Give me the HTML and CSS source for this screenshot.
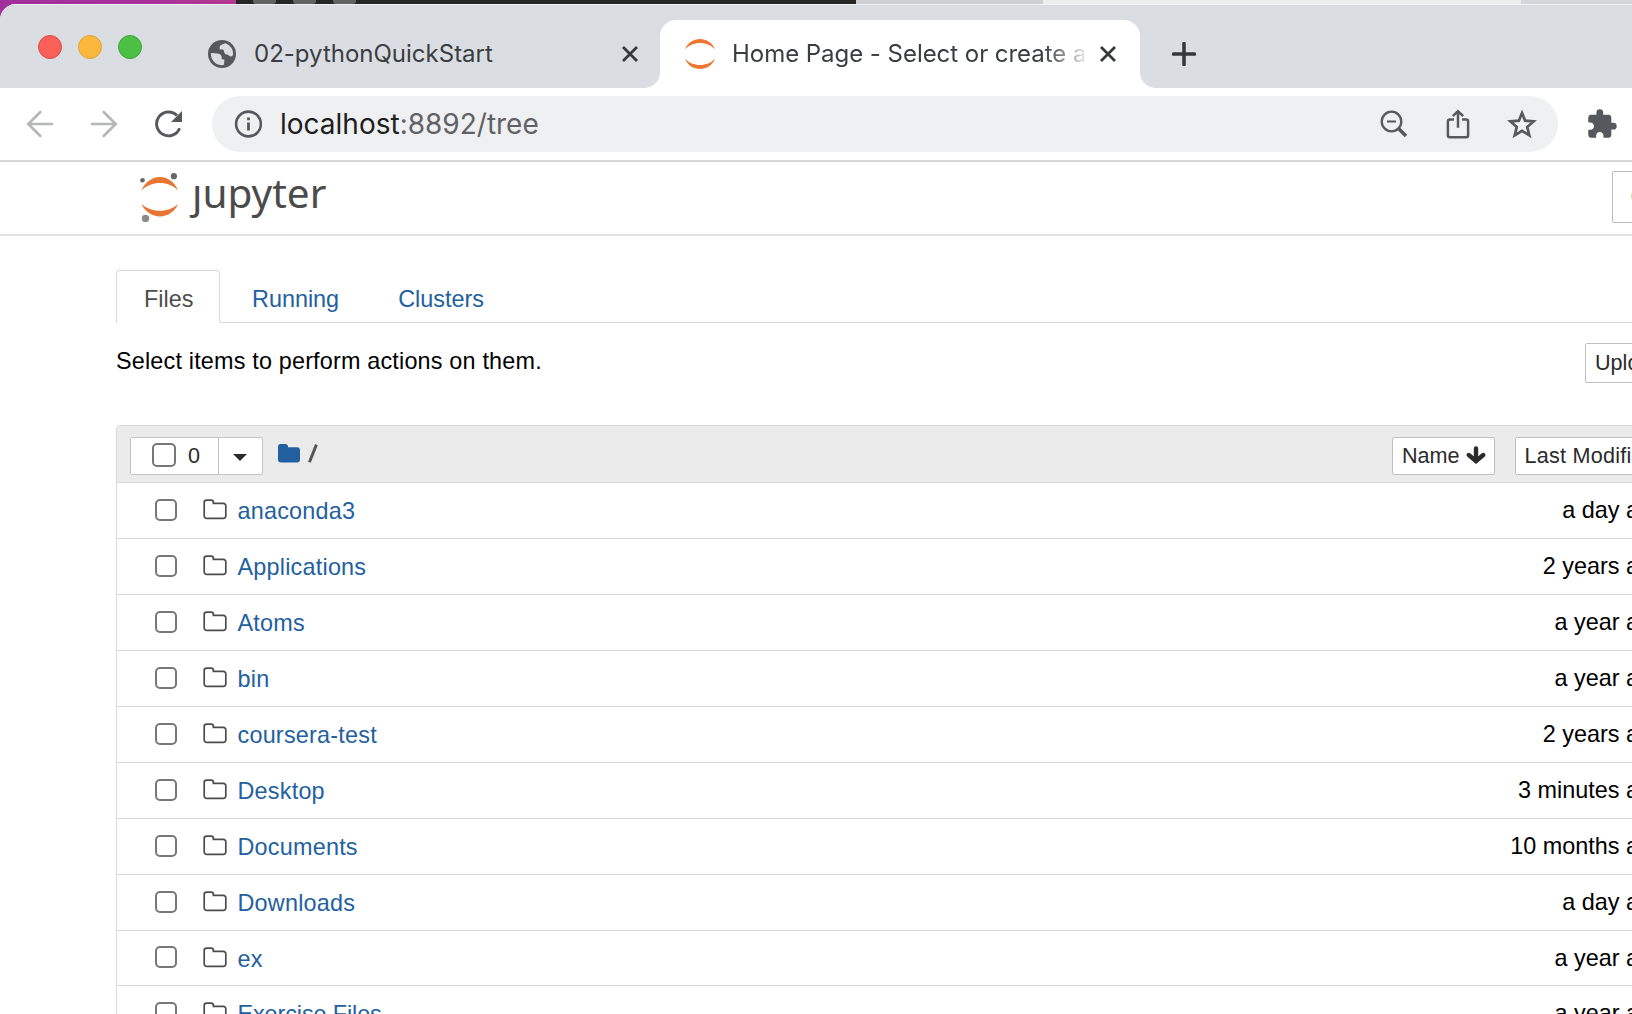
FILE: index.html
```html
<!DOCTYPE html>
<html lang="en">
<head>
<meta charset="utf-8">
<title>Home Page - Select or create a notebook</title>
<link rel="stylesheet" href="styles.css">
</head>
<body>
<svg class="defs" width="0" height="0" aria-hidden="true">
  <symbol id="folder" viewBox="0 0 24 21"><path d="M1.200 3.600A2.400 2.400 0 0 1 3.600 1.200H8A2.400 2.400 0 0 1 10.400 3.600V4.400H20.400A2.400 2.400 0 0 1 22.800 6.800V17A2.400 2.400 0 0 1 20.400 19.400H3.600A2.400 2.400 0 0 1 1.200 17Z" fill="none" stroke="#4d4d4d" stroke-width="1.700"/></symbol>
  <symbol id="close" viewBox="0 0 18 18"><path d="M2 2L16 16M16 2L2 16" fill="none" stroke="#35393d" stroke-width="2.800"/></symbol>
</svg>
<div class="desktop"><i></i><i></i><i></i></div>
<div class="window">
  <div class="tabstrip">
    <div class="lights"><i class="red"></i><i class="amber"></i><i class="green"></i></div>
    <div class="tab">
      <svg class="globe" width="28" height="28" viewBox="0 0 28 28"><circle cx="14" cy="14" r="14" fill="#55595e"/><path d="M2.900 13.800H9.500C12.500 13.800 14 15.500 14 18V19.200H16.800V24.600C10 27 2.900 21.500 2.900 13.800ZM16 3C15 4.500 11.200 4.300 11.200 7.200V9.400H14.400C16.200 9.400 15.600 14.200 18.600 14.200C21 14.200 21 15.800 22.800 15.800C24 15.800 24.600 15.200 25 14C25.500 8.500 21 3.800 16 3Z" fill="#dadde2" transform="rotate(4 14 14)"/></svg>
      <span class="title t1">02-pythonQuickStart</span>
      <svg class="x" width="18" height="18"><use href="#close"/></svg>
    </div>
    <div class="tab active">
      <svg class="fav" width="32" height="32" viewBox="0 0 32 32"><path d="M1 11.500C6-2.500 26-2.500 31 11.500C24 2.800 8 2.800 1 11.500ZM1 20.500C6 34.500 26 34.500 31 20.500C24 29.200 8 29.200 1 20.500Z" fill="#ee7630"/></svg>
      <span class="title t2">Home Page - Select or create a notebook</span>
      <svg class="x" width="18" height="18"><use href="#close"/></svg>
    </div>
    <svg class="plus" width="24" height="24" viewBox="0 0 24 24"><path d="M12 1.500V22.500M1.500 12H22.500" stroke="#35393d" stroke-width="3.600" stroke-linecap="round"/></svg>
  </div>
  <div class="toolbar">
    <svg class="nav" width="28" height="28" viewBox="0 0 28 28"><path d="M26 14H2M14.300 2L2.300 14L14.300 26" fill="none" stroke="#b5b7b9" stroke-width="2.700" stroke-linecap="round"/></svg>
    <svg class="nav" width="28" height="28" viewBox="0 0 28 28"><path d="M2 14H26M13.700 2L25.700 14L13.700 26" fill="none" stroke="#b5b7b9" stroke-width="2.700" stroke-linecap="round"/></svg>
    <svg class="nav" width="28" height="28" viewBox="0 0 28 28"><path d="M25.600 18.200A11.900 11.900 0 1 1 23 5.600" fill="none" stroke="#55595e" stroke-width="2.900"/><path d="M28 1V12H17Z" fill="#55595e"/></svg>
    <div class="omnibox">
      <svg width="28" height="28" viewBox="0 0 28 28"><circle cx="14.500" cy="14" r="12.400" fill="none" stroke="#55595e" stroke-width="2.600"/><path d="M14.500 12.600V20.400M14.500 7.400V10.200" stroke="#55595e" stroke-width="2.800"/></svg>
      <span class="url">localhost<b>:8892/tree</b></span>
      <div class="actions">
        <svg width="30" height="30" viewBox="0 0 30 30"><circle cx="12.500" cy="12.500" r="9.800" fill="none" stroke="#58595b" stroke-width="2.300"/><path d="M8 12.500H17" stroke="#58595b" stroke-width="2"/><path d="M19.500 19.500L27 27" stroke="#58595b" stroke-width="3.600"/></svg>
        <svg width="30" height="30" viewBox="0 0 30 30"><path d="M11 10.500H6.900A2 2 0 0 0 4.900 12.500V26.200A2 2 0 0 0 6.900 28.200H23.100A2 2 0 0 0 25.100 26.200V12.500A2 2 0 0 0 23.100 10.500H19M15 18.800V3M9.800 7.200L15 2.200L20.200 7.200" fill="none" stroke="#58595b" stroke-width="2.500"/></svg>
        <svg width="30" height="30" viewBox="0 0 30 30"><path d="M15 4L18.100 11.700L26.600 12.400L20.200 17.900L22.300 26.300L15 21.800L7.700 26.300L9.800 17.900L3.400 12.400L11.900 11.700Z" fill="none" stroke="#58595b" stroke-width="2.700"/></svg>
      </div>
    </div>
    <svg class="puzzle" width="29" height="29" viewBox="1.800 0.800 21.400 21.400"><path d="M20.500 11H19V7c0-1.100-.9-2-2-2h-4V3.500a2.500 2.500 0 0 0-5 0V5H4c-1.100 0-1.990.9-1.990 2v3.800H3.500c1.490 0 2.700 1.210 2.700 2.700s-1.210 2.700-2.700 2.700H2V20c0 1.100.9 2 2 2h3.800v-1.500c0-1.490 1.210-2.700 2.700-2.700s2.700 1.210 2.700 2.700V22H17c1.100 0 2-.9 2-2v-4h1.500a2.500 2.500 0 0 0 0-5z" fill="#55595e"/></svg>
  </div>
  <div class="header">
    <div class="logo">
      <svg width="44" height="52" viewBox="0 0 44 52"><path d="M3.500 20.500C11 2.500 33 2.500 40 20.500C31 10.500 13 10.500 3.500 20.500ZM3.500 34C11 50.500 33 50.500 40 34C31 43 13 43 3.500 34Z" fill="#e97532"/><circle cx="4.500" cy="10.200" r="2.300" fill="#666"/><circle cx="35.900" cy="6.200" r="3.100" fill="#666"/><circle cx="7.500" cy="48.500" r="3.700" fill="#8a8a8a"/></svg>
      <span>ȷupyter</span>
    </div>
    <div class="quit">Quit</div>
  </div>
  <div class="page">
    <div class="navtabs"><a class="on">Files</a><a>Running</a><a>Clusters</a></div>
    <div class="bar"><span>Select items to perform actions on them.</span><div class="btn upload">Upload</div></div>
    <div class="list">
      <div class="listhead">
        <div class="select"><div class="all"><i class="box"></i>0</div><div class="caret"><i></i></div></div>
        <svg class="home" width="22" height="19" viewBox="0 0 22 19"><path d="M0 2.600A2.600 2.600 0 0 1 2.600 0H7.400A2.600 2.600 0 0 1 10 2.600V3.200H19A3 3 0 0 1 22 6.200V15.600A3 3 0 0 1 19 18.600H3A3 3 0 0 1 0 15.600Z" fill="#2360a0"/></svg>
        <svg class="slash" width="10" height="19" viewBox="0 0 10 19"><path d="M1.400 18.200L8.400 .6" stroke="#555" stroke-width="2.900"/></svg>
        <div class="btn name">Name<svg width="20" height="19" viewBox="0 0 20 19"><path d="M10 2.500V13M2.800 9L10 15.200L17.200 9" fill="none" stroke="#2b2b2b" stroke-width="4.400" stroke-linecap="round"/></svg></div>
        <div class="btn modified">Last Modified</div>
      </div>
      <div class="row"><i class="box"></i><svg width="24" height="21"><use href="#folder"/></svg><a>anaconda3</a><time>a day ago</time></div>
      <div class="row"><i class="box"></i><svg width="24" height="21"><use href="#folder"/></svg><a>Applications</a><time>2 years ago</time></div>
      <div class="row"><i class="box"></i><svg width="24" height="21"><use href="#folder"/></svg><a>Atoms</a><time>a year ago</time></div>
      <div class="row"><i class="box"></i><svg width="24" height="21"><use href="#folder"/></svg><a>bin</a><time>a year ago</time></div>
      <div class="row"><i class="box"></i><svg width="24" height="21"><use href="#folder"/></svg><a>coursera-test</a><time>2 years ago</time></div>
      <div class="row"><i class="box"></i><svg width="24" height="21"><use href="#folder"/></svg><a>Desktop</a><time>3 minutes ago</time></div>
      <div class="row"><i class="box"></i><svg width="24" height="21"><use href="#folder"/></svg><a>Documents</a><time>10 months ago</time></div>
      <div class="row"><i class="box"></i><svg width="24" height="21"><use href="#folder"/></svg><a>Downloads</a><time>a day ago</time></div>
      <div class="row short"><i class="box"></i><svg width="24" height="21"><use href="#folder"/></svg><a>ex</a><time>a year ago</time></div>
      <div class="row last"><i class="box"></i><svg width="24" height="21"><use href="#folder"/></svg><a>Exercise Files</a><time>a year ago</time></div>
    </div>
  </div>
</div>
</body>
</html>
```
FILE: styles.css
```css
* { box-sizing: border-box; }
html, body { margin: 0; width: 1632px; height: 1014px; overflow: hidden; }
body {
  position: relative;
  background: linear-gradient(90deg, #a1309c 0, #a8329a 150px, #b43a8e 236px, #262626 236px);
  font-family: "Liberation Sans", Arial, sans-serif;
  font-size: 23.4px;
  color: #000;
}
svg { display: block; flex: none; }
.defs { position: absolute; }

.desktop {
  display: flex;
  gap: 17px;
  height: 4px;
  padding-left: 253px;
  background: linear-gradient(90deg, transparent 856px, #cfd0d3 856px, #cfd0d3 1043px, #eee 1043px, #eee 1521px, #d6d7da 1521px);
  overflow: hidden;
}
.desktop i { width: 23px; height: 4px; background: #636363; border-radius: 0 0 3px 3px; }

.window { height: 1010px; background: #fff; border-radius: 16px 0 0 0; overflow: hidden; }

.tabstrip {
  display: flex;
  height: 84px;
  background: #dadde2;
  border-top: 1px solid #eff1f3;
  font-family: Inter, sans-serif;
  font-size: 24px;
}
.lights { display: flex; gap: 16px; width: 180px; padding: 30px 0 0 38px; }
.lights i { width: 24px; height: 24px; border-radius: 50%; border: 1px solid; }
.red { background: #f96057; border-color: #e04a42 !important; }
.amber { background: #fcb83d; border-color: #dfa133 !important; }
.green { background: #4bc045; border-color: #3aa835 !important; }
.tab { display: flex; align-items: center; height: 68px; margin-top: 15px; width: 480px; padding-left: 28px; color: #3a3d41; }
.tab .title { width: 352px; overflow: hidden; white-space: nowrap; line-height: 36px; }
.globe { margin-right: 18px; }
.t2 { letter-spacing: -.04px; -webkit-mask-image: linear-gradient(90deg, #000 312px, transparent 360px); }
.tab.active { position: relative; padding-left: 24px; background: #fff; border-radius: 16px 16px 0 0; }
.tab.active::before, .tab.active::after {
  content: ""; position: absolute; bottom: 0; width: 16px; height: 16px;
}
.tab.active::before { left: -16px; background: radial-gradient(circle at 0 0, transparent 15.5px, #fff 16.5px); }
.tab.active::after { right: -16px; background: radial-gradient(circle at 100% 0, transparent 15.5px, #fff 16.5px); }
.fav { margin-right: 16px; }
.tab .x { margin-left: 15px; }
.plus { margin: 37px 0 0 32px; }

.toolbar { display: flex; align-items: center; height: 74px; padding-left: 26px; border-bottom: 2px solid #d6d7d9; }
.nav { margin-right: 36px; }
.nav:nth-child(3) { margin-right: 30px; }
.omnibox {
  display: flex; align-items: center;
  width: 1346px; height: 56px; padding-left: 22px;
  border-radius: 28px; background: #eff0f2;
  font-family: Inter, sans-serif; font-size: 28px; color: #1d1e21;
}
.url { margin-left: 18px; line-height: 56px; }
.url b { font-weight: 400; color: #606266; }
.actions { display: flex; gap: 34px; margin-left: auto; padding-right: 21px; }
.puzzle { margin: -2px 0 0 29.5px; }

.header { display: flex; justify-content: space-between; height: 74px; border-bottom: 2px solid #e1e1e1; }
.logo { display: flex; padding: 8px 0 0 138px; }
.logo span { margin-left: 10px; margin-top: -5px; font: 40.5px/56px "Noto Sans", sans-serif; color: #4b4b4b; }
.quit { flex: none; width: 90px; height: 52px; margin: 9px -70px 0 0; padding-left: 17.5px; border: 1px solid #bbb; border-radius: 2px; line-height: 50px; color: #888; }

.page { width: 1800px; padding: 34px 0 0 116px; }
.navtabs { display: flex; height: 53px; border-bottom: 1px solid #d9d9d9; }
.navtabs a { height: 53px; padding: 0 29px; line-height: 57px; color: #2360a0; border: 1px solid transparent; }
.navtabs a:nth-child(2) { padding-left: 31px; padding-right: 28px; }
.navtabs a.on { width: 104px; padding: 0 27px; color: #4d4d4d; background: #fff; border-color: #d9d9d9; border-bottom-color: #fff; border-radius: 4px 4px 0 0; }

.bar { display: flex; height: 102px; padding-top: 20px; }
.bar span { width: 1469px; line-height: 37px; letter-spacing: .18px; }
.btn { flex: none; border: 1px solid #bfbfbf; border-radius: 2px; background: #fff; color: #2b2b2b; font-size: 21.6px; white-space: nowrap; }
.upload { width: 90px; height: 40px; padding-left: 9px; line-height: 38px; }

.list { border: 1px solid #d9d9d9; border-radius: 4px 0 0 0; overflow: hidden; }
.listhead { display: flex; align-items: flex-start; height: 57px; padding: 11px 0 0 13px; background: #ebebeb; border-bottom: 1px solid #d4d4d4; }
.select { display: flex; width: 133px; height: 38px; border: 1px solid #c4c4c4; border-radius: 2px; background: #fff; color: #2b2b2b; font-size: 21.6px; line-height: 36px; }
.all { display: flex; align-items: center; gap: 12px; width: 88px; padding-left: 21px; border-right: 1px solid #c4c4c4; }
.box { flex: none; width: 22px; height: 22px; border: 2px solid #777; border-radius: 5px; background: #fff; }
.all .box { width: 24px; height: 24px; margin-top: -2px; }
.caret { padding: 16px 0 0 14px; }
.caret i { display: block; border: 7px solid transparent; border-top-color: #2b2b2b; border-bottom: 0; }
.home { margin: 7px 0 0 15px; }
.slash { margin: 7px 0 0 8px; }
.name { display: flex; width: 103px; height: 38px; margin-left: 1074px; padding-left: 9px; line-height: 36px; }
.name svg { margin: 8px 0 0 6px; }
.modified { width: 160px; height: 38px; margin-left: 20px; padding-left: 8.5px; line-height: 36px; letter-spacing: .25px; }

.row { display: flex; align-items: center; height: 56px; padding-left: 38px; border-bottom: 1px solid #d9d9d9; line-height: 55px; }
.row.short { height: 55px; }
.row.last { height: 56px; }
.row svg { margin: -2px 0 0 26px; }
.row .box { margin-top: -2px; }
.row a { width: 1127.5px; margin: 2px 0 0 10.5px; color: #2360a0; letter-spacing: .22px; }
.row.last a { letter-spacing: -.1px; }
.row time { width: 300px; text-align: right; }
```
